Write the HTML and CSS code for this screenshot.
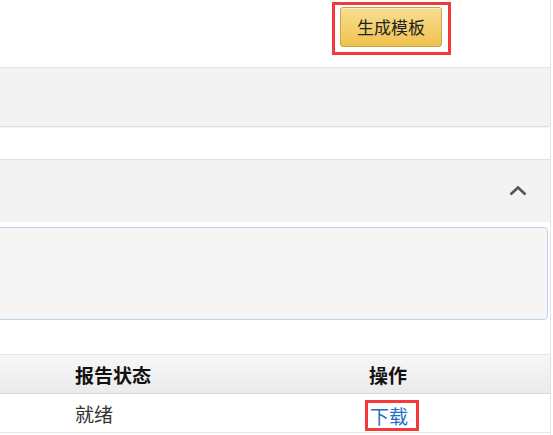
FILE: index.html
```html
<!DOCTYPE html>
<html lang="zh">
<head>
<meta charset="utf-8">
<title>报告</title>
<link rel="stylesheet" href="styles.css">
</head>
<body>
<div class="page">
  <div class="top">
    <div class="mark mark-btn">
      <button class="btn-gen">生成模板</button>
    </div>
  </div>
  <div class="panel1"></div>
  <div class="gap1"></div>
  <div class="section">
    <div class="sec-head">
      <svg class="chev" width="18" height="11" viewBox="0 0 18 11"><polyline points="1.5,9.5 9,2.5 16.5,9.5" fill="none" stroke="#555" stroke-width="2.6"/></svg>
    </div>
    <div class="infobox"></div>
  </div>
  <div class="table">
    <div class="thead">
      <div class="c1">报告状态</div>
      <div class="c2">操作</div>
    </div>
    <div class="trow">
      <div class="c1">就绪</div>
      <div class="c2"><span class="mark mark-link"><a class="link" href="#">下载</a></span></div>
    </div>
  </div>
</div>
</body>
</html>
```
FILE: styles.css
```css
html, body {
  margin: 0;
  padding: 0;
  background: #fff;
}
body {
  font-family: "Noto Sans CJK SC", "Liberation Sans", sans-serif;
  color: #222;
}
.page {
  width: 550px;
  border-right: 1px solid #e2e2e2;
  height: 435px;
  overflow: hidden;
}
.top {
  border-bottom: 1px solid #e4e4e4;
  display: flex;
  align-items: flex-start;
  padding-left: 332px;
  box-sizing: border-box;
  height: 68px;
  padding-top: 2px;
}
.mark {
  border: 3px solid #f23a3a;
  box-sizing: border-box;
}
.mark-btn {
  width: 119px;
  height: 53px;
  padding: 2px 0 0 5px;
}
.btn-gen {
  width: 102px;
  height: 40px;
  border: 1px solid #c9a546;
  border-radius: 3px;
  background: linear-gradient(#f8de91, #f0c24f);
  box-shadow: inset 0 1px 0 rgba(255,255,255,0.5);
  font-family: "Noto Sans CJK SC", sans-serif;
  font-size: 17px;
  color: #222;
  padding: 0;
  line-height: 38px;
}
.panel1 {
  height: 58px;
  background: #f3f3f3;
  border-bottom: 1px solid #dedede;
  border-bottom-right-radius: 4px;
  box-shadow: 0 1px 1px rgba(0,0,0,0.04);
}
.gap1 {
  height: 32px;
}
.section {
  border-top: 1px solid #e2e2e2;
}
.sec-head {
  height: 62px;
  background: #f3f3f3;
  display: flex;
  align-items: center;
  justify-content: flex-end;
  padding-right: 23px;
  box-sizing: border-box;
}
.chev {
  display: block;
  margin-top: -2px;
}
.infobox {
  margin: 5px 2px 0 -6px;
  height: 93px;
  box-sizing: border-box;
  border: 1px solid #bcd5ea;
  border-radius: 4px;
  background: #f5f5f5;
}
.table {
  margin-top: 34px;
}
.thead {
  height: 40px;
  box-sizing: border-box;
  border-top: 1px solid #e6e6e6;
  border-bottom: 1px solid #d9d9d9;
  background: linear-gradient(#f7f7f7, #ebebeb);
  display: flex;
  align-items: center;
  font-weight: bold;
  font-size: 19px;
  color: #111;
}
.trow {
  height: 39px;
  box-sizing: border-box;
  border-bottom: 1px solid #e6e6e6;
  display: flex;
  align-items: center;
  font-size: 19px;
  color: #333;
}
.c1 {
  width: 369px;
  padding-left: 75px;
  box-sizing: border-box;
}
.mark-link {
  display: inline-block;
  margin-left: -4px;
  padding: 0 8px 0 2px;
  height: 31px;
  line-height: 25px;
  margin-top: 4px;
}
.link {
  color: #1d6fc7;
  text-decoration: none;
}
```
